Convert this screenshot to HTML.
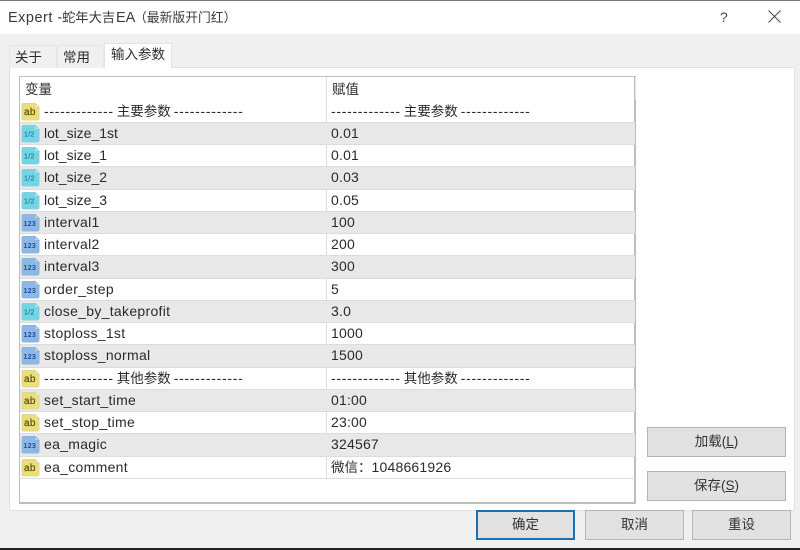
<!DOCTYPE html>
<html><head><meta charset="utf-8"><style>
*{box-sizing:border-box}
html,body{margin:0;padding:0}
body{width:800px;height:550px;overflow:hidden;position:relative;background:#f0f0f0;font-family:"Liberation Sans","Noto Sans CJK SC",sans-serif;font-size:14px;color:#2a2a2a}
.a{position:absolute;white-space:nowrap}
#top{left:0;top:0;width:800px;height:34px;background:#fff;border-top:1px solid #777}
.tab{top:45px;height:23px;line-height:23px;background:#f0f0f0;border:1px solid #e6e6e6;border-bottom:0;font-size:13.5px}
#panel{left:9px;top:67px;width:786px;height:444px;background:#fff;border:1px solid #e2e2e2}
#grid{left:19px;top:76px;width:617px;height:428px;background:#fff;border:1px solid #bdbdbd;border-width:1px 2px 2px 1px}
.r{left:20px;width:615px;height:22.25px;line-height:21px;border-bottom:1px solid #dcdcdc;letter-spacing:.3px}
.g{background:#e8e8e8}
.n{position:absolute;left:24px;top:0}
.v{position:absolute;left:311px;top:0;letter-spacing:.2px}
.l{letter-spacing:0}
.d{letter-spacing:.7px}
.c{font-size:13.5px;letter-spacing:0;margin:0 3px}
.r svg{position:absolute;left:1px;top:1px}
.vl{left:326px;top:77px;width:1px;height:403px;background:#dcdcdc}
.b{height:30px;background:#e1e1e1;border:1px solid #b4b4b4;text-align:center;line-height:28px;font-size:13.5px;color:#333}
u{text-decoration:underline}
</style></head><body>
<svg width="0" height="0" style="position:absolute"><defs>
<symbol id="ab" viewBox="0 0 19 19"><path d="M2.500 1.500h11.500l4 4v10.500q0 2-2 2H2.500q-1.500 0-1.500-1.500v-13.500q0-1.500 1.500-1.500z" fill="#e9dd7c" stroke="#e2d68f"/><path d="M14 1.500v4h4z" fill="#f6f0c4" stroke="#e2d68f"/><text x="3" y="13" font-family="Liberation Sans" font-size="10" fill="#5a4e08" stroke="#5a4e08" stroke-width=".2">ab</text></symbol>
<symbol id="hf" viewBox="0 0 19 19"><path d="M2.500 1.500h11.500l4 4v10.500q0 2-2 2H2.500q-1.500 0-1.500-1.500v-13.500q0-1.500 1.500-1.500z" fill="#72d5e4" stroke="#86cfe0"/><path d="M14 1.500v4h4z" fill="#c9f1f5" stroke="#86cfe0"/><text x="3" y="12.500" font-family="Liberation Sans" font-size="7" fill="#1f6c9c" stroke="#1f6c9c" stroke-width=".1">1/2</text></symbol>
<symbol id="n" viewBox="0 0 19 19"><path d="M2.500 1.500h11.500l4 4v10.500q0 2-2 2H2.500q-1.500 0-1.500-1.500v-13.500q0-1.500 1.500-1.500z" fill="#8db8e6" stroke="#8fb4dc"/><path d="M14 1.500v4h4z" fill="#d4e5f7" stroke="#8fb4dc"/><text x="2.500" y="13" font-family="Liberation Sans" font-size="7" font-weight="bold" fill="#1d4f96">123</text></symbol>
</defs></svg>

<div class="a" id="top"></div>
<div class="a" style="left:8px;top:8px;font-size:14.5px;line-height:20px;color:#3a3a3a;letter-spacing:.5px">Expert -</div>
<div class="a" style="left:62px;top:8px;font-size:13.3px;line-height:20px;color:#3a3a3a">蛇年大吉</div>
<div class="a" style="left:116px;top:8px;font-size:14.5px;line-height:20px;color:#3a3a3a">EA</div>
<div class="a" style="left:134px;top:8px;font-size:12.8px;line-height:20px;color:#3a3a3a">（最新版开门红）</div>
<div class="a" style="left:720px;top:8px;font-size:14px;line-height:18px;color:#444">?</div>
<svg class="a" style="left:768px;top:10px" width="13" height="13" viewBox="0 0 13 13"><path d="M.5.500l12 12M12.500.500l-12 12" stroke="#444" stroke-width="1" fill="none"/></svg>

<div class="a" id="panel"></div>
<div class="a tab" style="left:9px;width:48px;padding-left:5px">关于</div>
<div class="a tab" style="left:57px;width:47px;padding-left:5px">常用</div>
<div class="a tab" style="left:104px;top:43px;width:68px;height:25px;background:#fff;border-color:#e2e2e2;padding-left:6px;line-height:22px">输入参数</div>

<div class="a" id="grid"></div>
<div class="a" style="left:25px;top:80px;line-height:20px;font-size:13.5px">变量</div>
<div class="a" style="left:332px;top:80px;line-height:20px;font-size:13.5px">赋值</div>
<div class="a vl"></div>
<div class="a" style="left:635px;top:77px;width:1px;height:23px;background:#e4e4e4"></div>

<div class="a r" style="top:100.500px"><svg width="19" height="19"><use href="#ab"/></svg><span class="n"><span class="d">-------------</span><span class="c">主要参数</span><span class="d">-------------</span></span><span class="v"><span class="d">-------------</span><span class="c">主要参数</span><span class="d">-------------</span></span></div>
<div class="a r g" style="top:122.750px"><svg width="19" height="19"><use href="#hf"/></svg><span class="n l">lot_size_1st</span><span class="v">0.01</span></div>
<div class="a r" style="top:145px"><svg width="19" height="19"><use href="#hf"/></svg><span class="n l">lot_size_1</span><span class="v">0.01</span></div>
<div class="a r g" style="top:167.250px"><svg width="19" height="19"><use href="#hf"/></svg><span class="n l">lot_size_2</span><span class="v">0.03</span></div>
<div class="a r" style="top:189.500px"><svg width="19" height="19"><use href="#hf"/></svg><span class="n l">lot_size_3</span><span class="v">0.05</span></div>
<div class="a r g" style="top:211.750px"><svg width="19" height="19"><use href="#n"/></svg><span class="n">interval1</span><span class="v">100</span></div>
<div class="a r" style="top:234px"><svg width="19" height="19"><use href="#n"/></svg><span class="n">interval2</span><span class="v">200</span></div>
<div class="a r g" style="top:256.250px"><svg width="19" height="19"><use href="#n"/></svg><span class="n">interval3</span><span class="v">300</span></div>
<div class="a r" style="top:278.500px"><svg width="19" height="19"><use href="#n"/></svg><span class="n">order_step</span><span class="v">5</span></div>
<div class="a r g" style="top:300.750px"><svg width="19" height="19"><use href="#hf"/></svg><span class="n">close_by_takeprofit</span><span class="v">3.0</span></div>
<div class="a r" style="top:323px"><svg width="19" height="19"><use href="#n"/></svg><span class="n">stoploss_1st</span><span class="v">1000</span></div>
<div class="a r g" style="top:345.250px"><svg width="19" height="19"><use href="#n"/></svg><span class="n">stoploss_normal</span><span class="v">1500</span></div>
<div class="a r" style="top:367.500px"><svg width="19" height="19"><use href="#ab"/></svg><span class="n"><span class="d">-------------</span><span class="c">其他参数</span><span class="d">-------------</span></span><span class="v"><span class="d">-------------</span><span class="c">其他参数</span><span class="d">-------------</span></span></div>
<div class="a r g" style="top:389.750px"><svg width="19" height="19"><use href="#ab"/></svg><span class="n">set_start_time</span><span class="v">01:00</span></div>
<div class="a r" style="top:412px"><svg width="19" height="19"><use href="#ab"/></svg><span class="n">set_stop_time</span><span class="v">23:00</span></div>
<div class="a r g" style="top:434.250px"><svg width="19" height="19"><use href="#n"/></svg><span class="n">ea_magic</span><span class="v">324567</span></div>
<div class="a r" style="top:456.500px"><svg width="19" height="19"><use href="#ab"/></svg><span class="n">ea_comment</span><span class="v"><span style="font-size:13.5px;letter-spacing:0">微信：</span>1048661926</span></div>

<div class="a b" style="left:647px;top:427px;width:139px">加载(<u>L</u>)</div>
<div class="a b" style="left:647px;top:471px;width:139px">保存(<u>S</u>)</div>
<div class="a b" style="left:476px;top:510px;width:99px;border:2px solid #1c6fb0;line-height:26px">确定</div>
<div class="a b" style="left:585px;top:510px;width:99px">取消</div>
<div class="a b" style="left:692px;top:510px;width:99px">重设</div>
<div class="a" style="left:0;top:548px;width:800px;height:2px;background:#222"></div>
</body></html>
